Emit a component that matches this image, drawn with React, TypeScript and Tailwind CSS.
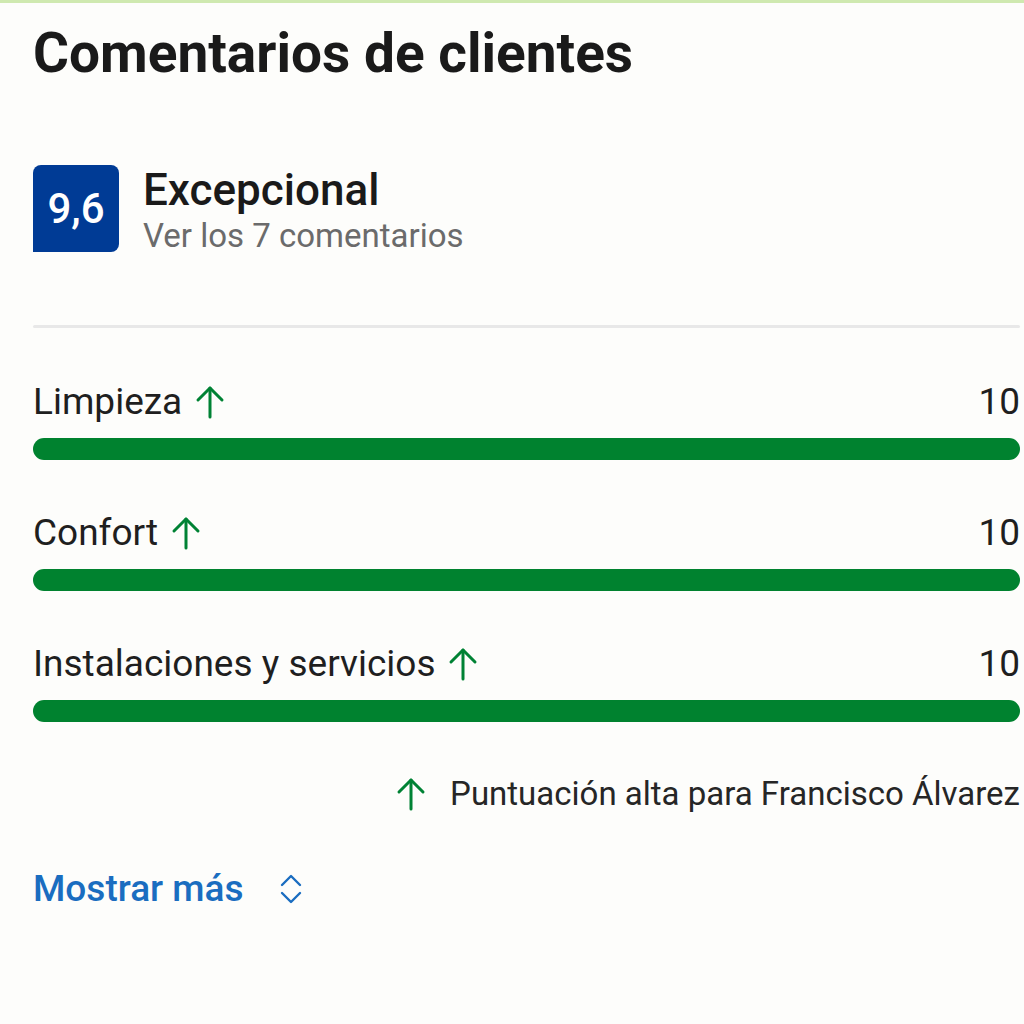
const rows = [
  { label: 'Limpieza', score: 10 },
  { label: 'Confort', score: 10 },
  { label: 'Instalaciones y servicios', score: 10 },
];

function UpArrow({ className }: { className?: string }) {
  return (
    <svg viewBox="0 0 32 34" className={className} fill="none" stroke="currentColor" strokeWidth={3} strokeLinecap="round" strokeLinejoin="round">
      <path d="M16 32V3" />
      <path d="M4 15L16 3l12 12" />
    </svg>
  );
}

export default function App() {
  return (
    <div className="min-h-[1024px] w-[1024px] bg-[#fdfdfb] border-t-[3px] border-[#cfe9b0] font-['Roboto',sans-serif] pl-[33px] pr-[4px]">
      <h1 className="pt-[17px] text-[55px] font-bold leading-[66px] text-[#1a1a1a]">
        Comentarios de clientes
      </h1>

      {/* Score */}
      <div className="mt-[79px] flex items-start gap-[24px]">
        <div className="w-[86px] h-[87px] bg-[#003b95] rounded-[8px] rounded-bl-none flex items-center justify-center text-white text-[42px] font-medium">
          9,6
        </div>
        <div className="-mt-[1px] flex flex-col">
          <span className="text-[44px] font-medium leading-[52px] text-[#1a1a1a]">Excepcional</span>
          <span className="text-[33px] leading-[40px] text-[#6b6b6b]">Ver los 7 comentarios</span>
        </div>
      </div>

      <div className="mt-[69px] h-[3px] bg-[#e8e8e8] rounded-full" />

      {/* Categories */}
      <div className="mt-[52px] flex flex-col gap-[51px]">
        {rows.map((r) => (
          <div key={r.label}>
            <div className="flex items-center justify-between h-[44px] text-[37px] leading-[44px] text-[#1f1f1f]">
              <div className="flex items-center gap-[12px]">
                <span>{r.label}</span>
                <UpArrow className="w-[32px] h-[34px] text-[#008234]" />
              </div>
              <span>{r.score}</span>
            </div>
            <div className="mt-[14px] h-[22px] bg-[#00822f] rounded-full" />
          </div>
        ))}
      </div>

      <div className="mt-[52px] flex items-center justify-end gap-[23px] text-[33px] leading-[40px] text-[#262626]">
        <UpArrow className="w-[32px] h-[34px] text-[#008234]" />
        <span>Puntuación alta para Francisco Álvarez</span>
      </div>

      <button className="mt-[53px] flex items-center gap-[35px] text-[37px] leading-[44px] font-medium text-[#1a6dc0]">
        <span>Mostrar más</span>
        <svg viewBox="0 0 24 30" className="w-[24px] h-[30px]" fill="none" stroke="currentColor" strokeWidth={2.4} strokeLinecap="round" strokeLinejoin="round">
          <path d="M3 11l9-9 9 9" />
          <path d="M3 19l9 9 9-9" />
        </svg>
      </button>
    </div>
  );
}
